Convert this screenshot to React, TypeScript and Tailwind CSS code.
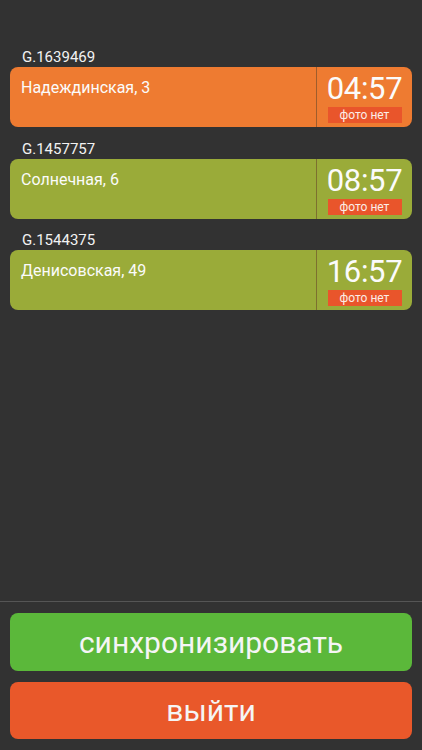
import React from "react";

const items = [
  { id: "G.1639469", addr: "Надеждинская, 3", time: "04:57", color: "bg-[#ee7b31]" },
  { id: "G.1457757", addr: "Солнечная, 6", time: "08:57", color: "bg-[#9aab39]" },
  { id: "G.1544375", addr: "Денисовская, 49", time: "16:57", color: "bg-[#9aab39]" },
];

export default function App() {
  return (
    <div
      className="h-[750px] w-[422px] bg-[#323232] flex flex-col text-white"
      style={{ fontFamily: "Roboto, 'Noto Sans', sans-serif" }}
    >
      <div className="flex-1 flex flex-col gap-[11.5px] px-[10px] pt-[47px]">
        {items.map((it) => (
          <div key={it.id} className="flex flex-col">
            <div className="h-[20px] flex items-center pl-[12px] pt-[1px] text-[15px] leading-none text-[#f2f2f2]">
              {it.id}
            </div>
            <div className={`h-[60px] rounded-[8px] flex ${it.color}`}>
              <div className="flex-1 pl-[11px] pt-[11px] text-[16px] leading-[20px] text-[#fbfbfb]">
                {it.addr}
              </div>
              <div className="w-[96px] border-l border-[#6b4a2a]/60 flex flex-col items-center pt-[4px]">
                <div className="text-[31px] leading-[36px] tracking-[-0.3px] text-[#fbfbfb]">{it.time}</div>
                <div className="w-[74px] h-[16px] bg-[#e9552b] flex items-center justify-center text-[12px] leading-none text-[#fbeee8]">
                  фото нет
                </div>
              </div>
            </div>
          </div>
        ))}
      </div>
      <div className="border-t border-[#555555] px-[10px] pt-[11px] pb-[11px] flex flex-col gap-[11px]">
        <button className="h-[58px] rounded-[8px] bg-[#5bb83a] text-[30px] text-[#f5f5f5] flex items-center justify-center">
          синхронизировать
        </button>
        <button className="h-[57px] rounded-[8px] bg-[#e9582a] text-[30px] text-[#f5f5f5] flex items-center justify-center">
          выйти
        </button>
      </div>
    </div>
  );
}
